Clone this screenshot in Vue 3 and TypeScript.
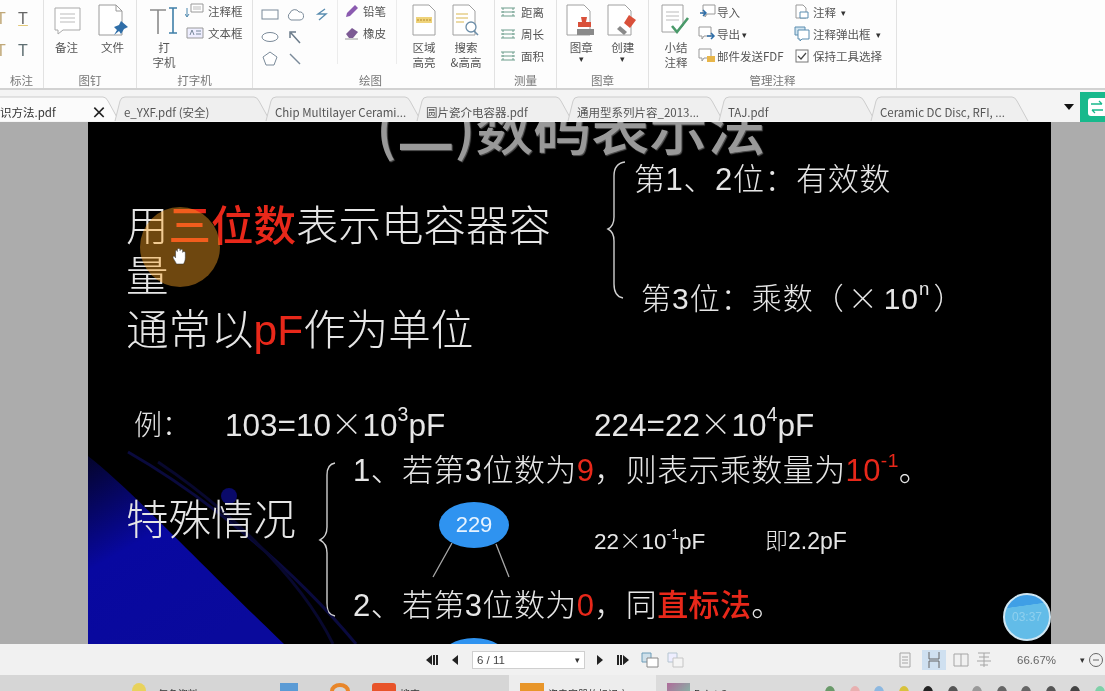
<script setup lang="ts">
interface Tab { label: string; width: number; active?: boolean }

const tabs: Tab[] = [
  { label: '识方法.pdf', width: 115, active: true },
  { label: 'e_YXF.pdf (安全)', width: 151 },
  { label: 'Chip Multilayer Cerami...', width: 151 },
  { label: '圆片瓷介电容器.pdf', width: 151 },
  { label: '通用型系列片容_2013...', width: 151 },
  { label: 'TAJ.pdf', width: 152 },
  { label: 'Ceramic DC Disc, RFI, ...', width: 153 },
]

const toolsMeasure = ['距离', '周长', '面积']
const trayColors = ['#6a9a6a', '#e8b0b0', '#8db8e0', '#d8c23c', '#222', '#555', '#999', '#666', '#666', '#555', '#444', '#7fd0a8']

function tabPath(w: number, active?: boolean) {
  const left = active ? '-2 25 L-2 1' : '0 25 L5 5 Q6 1 10 1'
  return `M${left} H${w - 12} Q${w - 9} 1 ${w - 7} 5 L${w + 4} 25`
}
</script>

<template>
  <div class="app">
    <!-- ribbon -->
    <div class="ribbon">
      <section class="group" style="width: 44px">
        <div class="body mark-tools">
          <span class="t-mark o">T</span><span class="t-mark u">T</span>
          <span class="t-mark o">T</span><span class="t-mark w">T</span>
        </div>
        <div class="glabel">标注</div>
      </section>

      <section class="group" style="width: 93px">
        <div class="body big-row">
          <div class="big">
            <svg width="30" height="32" viewBox="0 0 30 32"><path d="M3 4h25v22H11l-5 4v-4H3z" fill="#fff" stroke="#a9a9a9" /><path d="M8 10h15M8 14h15M8 18h15" stroke="#bbb" /></svg>
            <span>备注</span>
          </div>
          <div class="big">
            <svg width="32" height="32" viewBox="0 0 32 32"><path d="M2 1h17l6 6v24H2z" fill="#fff" stroke="#9a9a9a" /><path d="M19 1v6h6" fill="none" stroke="#9a9a9a" /><path d="M24 17l7 6-4 2-3 5-2-3-5 4 3-5-3-3 5-2z" fill="#2f6ea8" /></svg>
            <span>文件</span>
          </div>
        </div>
        <div class="glabel">图钉</div>
      </section>

      <section class="group" style="width: 116px">
        <div class="body big-row typer">
          <div class="big tw">
            <svg width="30" height="30" viewBox="0 0 30 30"><path d="M1 4h16M9 4v24" stroke="#8a8a8a" stroke-width="1.6" fill="none" /><path d="M20 2h8M24 2v25M20 27h8" stroke="#3f7fa8" stroke-width="1.6" fill="none" /></svg>
            <span>打<br />字机</span>
          </div>
          <div class="small-list">
            <div class="small"><svg width="20" height="16" viewBox="0 0 20 16"><path d="M6 1h12v8H6z" fill="#fff" stroke="#999" /><path d="M8 4h8M8 6h8" stroke="#bbb" /><path d="M2 5v8M0 11l2 3 2-3" fill="none" stroke="#4b86ad" /></svg>注释框</div>
            <div class="small"><svg width="20" height="14" viewBox="0 0 20 14"><path d="M2 2h16v10H2z" fill="#eef" stroke="#999" /><path d="M5 9l2-5 2 5M11 5h5M11 8h5" fill="none" stroke="#789" /></svg>文本框</div>
          </div>
        </div>
        <div class="glabel">打字机</div>
      </section>

      <section class="group" style="width: 242px">
        <div class="body draw">
          <div class="shapes">
            <svg width="18" height="14" viewBox="0 0 18 14"><rect x="1" y="2" width="16" height="9" fill="#fff" stroke="#7a8a99" /></svg>
            <svg width="18" height="14" viewBox="0 0 18 14"><path d="M5 12a4 4 0 0 1-1-7 5 5 0 0 1 9-1 4 4 0 0 1 1 8z" fill="#fff" stroke="#7a8a99" /></svg>
            <svg width="18" height="14" viewBox="0 0 18 14"><path d="M12 1L5 6h8l-7 6" fill="none" stroke="#5a8db0" stroke-width="1.4" /></svg>
            <svg width="18" height="14" viewBox="0 0 18 14"><ellipse cx="9" cy="7" rx="8" ry="4.5" fill="#fff" stroke="#7a8a99" /></svg>
            <svg width="18" height="14" viewBox="0 0 18 14"><path d="M14 13L5 3M4 8V2h6" fill="none" stroke="#6b7b8a" stroke-width="1.5" /></svg>
            <i></i>
            <svg width="18" height="16" viewBox="0 0 18 16"><path d="M9 1l7 5-3 8H5L2 6z" fill="#fff" stroke="#7a8a99" /></svg>
            <svg width="18" height="16" viewBox="0 0 18 16"><path d="M4 3l10 10" stroke="#7a8a99" stroke-width="1.4" /></svg>
          </div>
          <div class="pencils">
            <div class="small"><svg width="16" height="16" viewBox="0 0 16 16"><path d="M2 14l1-4 8-8 3 3-8 8z" fill="#8b5bb0" /></svg>铅笔</div>
            <div class="small"><svg width="16" height="16" viewBox="0 0 16 16"><path d="M2 9l6-6 6 4-5 6H5z" fill="#7c5a94" /><path d="M1 14h13" stroke="#999" /></svg>橡皮</div>
          </div>
          <div class="big area">
            <svg width="24" height="32" viewBox="0 0 24 32"><path d="M1 1h16l6 6v24H1z" fill="#fff" stroke="#a0a0a0" /><path d="M4 13h16v6H4z" fill="#efd37a" /><path d="M5 16h14" stroke="#b58a2c" stroke-dasharray="2 1" /></svg>
            <span>区域<br />高亮</span>
          </div>
          <div class="big search">
            <svg width="28" height="32" viewBox="0 0 28 32"><path d="M1 1h16l6 6v24H1z" fill="#fff" stroke="#a0a0a0" /><path d="M4 10h12M4 14h12M4 18h8" stroke="#d9b64e" /><circle cx="19" cy="23" r="5" fill="#fff" stroke="#6b8da8" stroke-width="1.3" /><path d="M22 27l4 4" stroke="#6b8da8" stroke-width="1.6" /></svg>
            <span>搜索<br />&amp;高高</span>
          </div>
        </div>
        <div class="glabel draw-label">绘图</div>
      </section>

      <section class="group" style="width: 62px">
        <div class="body measure">
          <div v-for="m in toolsMeasure" :key="m" class="small">
            <svg width="16" height="12" viewBox="0 0 16 12"><path d="M1 2h14M1 10h14M1 6h14" stroke="#6d9d8c" /><path d="M3 2v8M13 2v8" stroke="#6d9d8c" stroke-dasharray="2 1" /></svg>{{ m }}
          </div>
        </div>
        <div class="glabel">测量</div>
      </section>

      <section class="group" style="width: 92px">
        <div class="body big-row stamps">
          <div class="big">
            <svg width="30" height="32" viewBox="0 0 30 32"><path d="M1 1h17l6 6v24H1z" fill="#fff" stroke="#a0a0a0" /><path d="M15 13h6l-1 5h5v5H12v-5h4z" fill="#d9503a" /><path d="M11 25h17v6H11z" fill="#8a8a8a" /></svg>
            <span>图章<b class="caret block">▾</b></span>
          </div>
          <div class="big">
            <svg width="32" height="32" viewBox="0 0 32 32"><path d="M1 1h17l6 6v24H1z" fill="#fff" stroke="#a0a0a0" /><path d="M22 11l7 5-6 8-6-5z" fill="#d9503a" /><path d="M13 22l7 6-3 3-7-6z" fill="#8a8a8a" /></svg>
            <span>创建<b class="caret block">▾</b></span>
          </div>
        </div>
        <div class="glabel">图章</div>
      </section>

      <section class="group last" style="width: 248px">
        <div class="body manage">
          <div class="big summary">
            <svg width="30" height="32" viewBox="0 0 30 32"><path d="M1 1h21v21l-6 6H1z" fill="#fff" stroke="#a0a0a0" /><path d="M5 8h13M5 12h13M5 16h13" stroke="#bbb" /><path d="M11 22l5 6 11-14" fill="none" stroke="#4a9a6a" stroke-width="2.6" /></svg>
            <span>小结<br />注释</span>
          </div>
          <div class="small-list col2">
            <div class="small"><svg width="20" height="16" viewBox="0 0 20 16"><path d="M6 1h12v9H10l-2 3v-3H6z" fill="#fff" stroke="#999" /><path d="M3 9h6M6 6l3 3-3 3" fill="none" stroke="#2f6ea8" stroke-width="1.5" /></svg>导入</div>
            <div class="small"><svg width="20" height="16" viewBox="0 0 20 16"><path d="M2 1h12v9H7l-2 3v-3H2z" fill="#fff" stroke="#999" /><path d="M10 10h7M14 7l3 3-3 3" fill="none" stroke="#2f6ea8" stroke-width="1.5" /></svg>导出<b class="caret">▾</b></div>
            <div class="small"><svg width="20" height="16" viewBox="0 0 20 16"><path d="M2 1h12v9H7l-2 3v-3H2z" fill="#fff" stroke="#999" /><path d="M10 8h8v6h-8z" fill="#e8b64a" /></svg>邮件发送FDF</div>
          </div>
          <div class="small-list col3">
            <div class="small"><svg width="16" height="16" viewBox="0 0 16 16"><path d="M2 1h7l3 3v10H2z" fill="#fff" stroke="#999" /><path d="M6 8h8v6H6z" fill="#fff" stroke="#5a8db0" /></svg>注释<b class="caret">▾</b></div>
            <div class="small"><svg width="16" height="16" viewBox="0 0 16 16"><path d="M1 1h10v8H1z" fill="#cfe3ef" stroke="#5a8db0" /><path d="M4 4h11v9H8l-2 2v-2H4z" fill="#fff" stroke="#5a8db0" /></svg>注释弹出框<b class="caret">▾</b></div>
            <div class="small"><svg width="16" height="16" viewBox="0 0 16 16"><rect x="2" y="2" width="12" height="12" fill="#fff" stroke="#777" /><path d="M4 8l3 3 5-6" fill="none" stroke="#444" stroke-width="1.2" /></svg>保持工具选择</div>
          </div>
        </div>
        <div class="glabel">管理注释</div>
      </section>
    </div>

    <!-- tabs -->
    <div class="tabbar">
      <div v-for="t in tabs" :key="t.label" class="tab" :class="{ active: t.active }" :style="{ width: t.width + 'px' }">
        <svg class="tab-shape" :width="t.width + 6" height="26">
          <path :d="tabPath(t.width, t.active)" :fill="t.active ? '#fbfbfb' : '#efefef'" stroke="#cdcdcd" />
        </svg>
        <span class="tab-label">{{ t.label }}</span>
        <span v-if="t.active" class="tab-x">×</span>
      </div>
      <svg class="tab-more" width="10" height="6" viewBox="0 0 10 6"><path d="M0 0h10L5 6z" fill="#111" /></svg>
      <div class="tab-green">
        <span class="swap">
          <svg width="14" height="14" viewBox="0 0 14 14"><path d="M1 4h11M9 1l3 3M13 10H2M5 13l-3-3" fill="none" stroke="#18b98c" stroke-width="1.3" /></svg>
        </span>
      </div>
    </div>

    <!-- document view -->
    <main class="viewer">
      <div class="slide">
        <svg class="slide-bg" width="963" height="522" viewBox="0 0 963 522">
          <defs>
            <linearGradient id="sw" x1="0" y1="0" x2="0.6" y2="1">
              <stop offset="0" stop-color="#04042a" />
              <stop offset="0.45" stop-color="#0808a0" />
              <stop offset="1" stop-color="#0a0a9c" />
            </linearGradient>
          </defs>
          <path d="M0 334C40 365 90 420 196 522H0z" fill="url(#sw)" />
          <path d="M40 330C110 370 200 440 268 522" fill="none" stroke="#0a0a3e" stroke-width="3" />
          <path d="M70 340C130 380 210 450 245 522" fill="none" stroke="#08082e" stroke-width="3" />
          <circle cx="141" cy="374" r="8" fill="#0a0a6a" />
          <path d="M537 40c-8 1-11 6-11 14v41c0 7-2 10-6 12 4 2 6 5 6 12v43c0 8 3 13 9 14" fill="none" stroke="#cfcfcf" stroke-width="1.4" />
          <path d="M247 341c-6 1-8 5-8 12v52c0 8-3 11-7 13 4 2 7 5 7 13v50c0 8 2 12 8 13" fill="none" stroke="#cfcfcf" stroke-width="1.4" />
          <path d="M364 421L345 455M408 422l13 33" stroke="#a8a8a8" stroke-width="1.3" fill="none" />
        </svg>

        <div class="title">(二)数码表示法</div>

        <div class="line main l1">用<em>三位数</em>表示电容器容</div>
        <div class="line main l2">量</div>
        <div class="line main l3">通常以<em class="lat">pF</em>作为单位</div>

        <div class="line r1">第1、2位：有效数</div>
        <div class="line r2">第3位：乘数（<span class="wide">×</span>10<sup>n</sup>）</div>

        <div class="line ex0">例：</div>
        <div class="line ex1">103=10<span class="wide">×</span>10<sup>3</sup>pF</div>
        <div class="line ex2">224=22<span class="wide">×</span>10<sup>4</sup>pF</div>

        <div class="line main sp">特殊情况</div>
        <div class="line c1">1、若第3位数为<em>9</em>，则表示乘数量为<em>10<sup>-1</sup></em>。</div>
        <div class="line c2">2、若第3位数为<em>0</em>，同<em>直标法</em>。</div>

        <div class="oval o1">229</div>
        <div class="oval o2"></div>

        <div class="line n1">22<span class="wide">×</span>10<sup>-1</sup>pF</div>
        <div class="line n2">即2.2pF</div>

        <div class="spot"></div>
        <svg class="hand" width="16" height="18" viewBox="0 0 18 20"><path d="M5 19c-1-3-4-6-4-8 0-1 2-1 3 1V5c0-2 2-2 2 0V3c0-2 3-2 3 0v1c0-2 3-2 3 0v2c0-2 3-1 3 0v6c0 3-1 5-2 7z" fill="#fff" stroke="#333" stroke-width=".6" /></svg>
        <div class="timer"><span>03:37</span></div>
      </div>
    </main>

    <!-- status bar -->
    <div class="status">
      <div class="pager">
        <svg width="14" height="12" viewBox="0 0 14 12"><path d="M7 1L1 6l6 5zM8 1h2v10H8zM11 1h2v10h-2z" fill="#222" /></svg>
        <svg width="9" height="12" viewBox="0 0 9 12"><path d="M8 1L2 6l6 5z" fill="#222" /></svg>
        <div class="page-input"><span>6 / 11</span><b>▾</b></div>
        <svg width="9" height="12" viewBox="0 0 9 12"><path d="M1 1l6 5-6 5z" fill="#222" /></svg>
        <svg width="14" height="12" viewBox="0 0 14 12"><path d="M7 1l6 5-6 5zM1 1h2v10H1zM4 1h2v10H4z" fill="#222" /></svg>
        <svg width="18" height="16" viewBox="0 0 18 16"><path d="M1 1h9v9H1z" fill="#cfe0ea" stroke="#6d9cb8" /><path d="M6 6h11v9H6z" fill="#fff" stroke="#888" /></svg>
        <svg class="dim-icon" width="18" height="16" viewBox="0 0 18 16"><path d="M1 1h9v9H1z" fill="#eef" stroke="#b5c5d0" /><path d="M6 6h10v9H6z" fill="#f4f4f4" stroke="#c5c5c5" /></svg>
      </div>
      <div class="views">
        <svg width="14" height="16" viewBox="0 0 14 16"><path d="M2 1h10v14H2zM4 5h6M4 8h6M4 11h6" fill="none" stroke="#a5a5a5" /></svg>
        <span class="view-on"><svg width="14" height="16" viewBox="0 0 14 16"><path d="M2 0v7h10V0M2 16V9h10v7" fill="none" stroke="#666" /></svg></span>
        <svg width="16" height="16" viewBox="0 0 16 16"><path d="M1 2h14v12H1zM8 2v12" fill="none" stroke="#a5a5a5" /></svg>
        <svg width="16" height="16" viewBox="0 0 16 16"><path d="M2 1h12M3 5h10M8 1v14M1 9h14M4 13h8" fill="none" stroke="#a5a5a5" /></svg>
        <span class="zoom">66.67%</span>
        <b class="caret zoom-caret">▾</b>
        <svg width="16" height="16" viewBox="0 0 16 16"><circle cx="8" cy="8" r="6.5" fill="none" stroke="#666" /><path d="M5 8h6" stroke="#666" /></svg>
      </div>
    </div>

    <!-- taskbar, cut off by the bottom edge -->
    <div class="taskbar">
      <span class="tk" style="width: 132px"></span>
      <span class="tk" style="width: 148px"><i style="width: 14px; background: #e8d25c; border-radius: 50% 50% 0 0"></i><u style="margin-left: 8px">每条资料</u></span>
      <span class="tk" style="width: 50px"><i style="width: 18px; background: #5b9bd5"></i></span>
      <span class="tk" style="width: 42px"><i style="width: 20px; border: 4px solid #e8862a; box-sizing: border-box; border-radius: 50%"></i></span>
      <span class="tk" style="width: 137px"><i style="width: 24px; background: #e8542a; border-radius: 3px"></i><u>搜索</u></span>
      <span class="tk on"><i style="width: 24px; background: #e8962a"></i><u>瓷电容器的标识方</u></span>
      <span class="tk dim"><i style="width: 23px; background: linear-gradient(135deg, #b06a9a, #7fc2a8)"></i><u>Paint.S</u></span>
      <span class="tray">
        <i v-for="(c, n) in trayColors" :key="n" :style="{ background: c }"></i>
      </span>
    </div>
  </div>
</template>

<style scoped>
.app {
  width: 1105px;
  height: 691px;
  overflow: hidden;
  display: flex;
  flex-direction: column;
  background: #f1f1f1;
  color: #555;
  font-family: "Noto Sans CJK SC", "Liberation Sans", sans-serif;
  filter: blur(0.45px);
}

/* ribbon */
.ribbon {
  height: 88px;
  flex: none;
  display: flex;
  background: #fdfdfd;
  border-bottom: 2px solid #d2d2d2;
}
.group {
  flex: none;
  box-sizing: border-box;
  display: flex;
  flex-direction: column;
  border-right: 1px solid #e2e2e2;
}
.group.last { margin-right: auto; }
.body {
  flex: 1;
  min-height: 0;
}
.glabel {
  height: 15px;
  line-height: 15px;
  text-align: center;
  font-size: 11.5px;
  color: #777;
}
.big-row {
  display: flex;
  justify-content: space-around;
}
.big {
  display: flex;
  flex-direction: column;
  align-items: center;
  padding-top: 4px;
  font-size: 11.5px;
  line-height: 15px;
  text-align: center;
  color: #555;
}
.big span { margin-top: 4px; }
.small {
  display: flex;
  align-items: center;
  gap: 3px;
  height: 22px;
  font-size: 11.5px;
  color: #555;
  white-space: nowrap;
}
.caret {
  font-size: 9px;
  font-weight: 400;
  color: #333;
  margin-left: 2px;
}
.caret.block {
  display: block;
  margin: -1px 0 0;
  line-height: 10px;
}

.mark-tools {
  display: grid;
  grid-template-columns: 22px 22px;
  grid-auto-rows: 32px;
  margin-left: -10px;
  padding-top: 9px;
  font-family: "Liberation Sans", sans-serif;
}
.t-mark { font-size: 16px; line-height: 20px; text-align: center; color: #666; }
.t-mark.o { color: #c0a878; }
.t-mark.u { text-decoration: underline #e2c878; }
.t-mark.w { color: #5f6f72; }

.typer { justify-content: flex-start; gap: 6px; padding-left: 12px; }
.tw { width: 30px; padding-top: 6px; }
.tw span { margin-top: 4px; }

.draw { display: flex; padding-left: 8px; }
.shapes {
  width: 80px;
  display: grid;
  grid-template-columns: 25px 27px 25px;
  grid-auto-rows: 22px;
  padding-top: 4px;
  align-items: center;
  align-content: start;
}
.pencils {
  width: 60px;
  margin-left: -4px;
  padding-left: 6px;
  border-left: 1px solid #ececec;
  border-right: 1px solid #ececec;
  height: 64px;
  box-sizing: border-box;
}
.area { width: 44px; margin-left: 5px; }
.search { width: 40px; }
.draw-label { padding-right: 6px; }
.measure { padding: 1px 0 0 5px; }
.measure svg { margin-right: 2px; }
.stamps { padding: 0 4px; }
.manage { display: flex; padding-left: 11px; }
.summary { width: 32px; }
.col2 { width: 97px; margin-left: 5px; padding-top: 1px; }
.col2 .small { gap: 0; }
.col3 { padding-top: 1px; }

/* tabs */
.tabbar {
  height: 32px;
  flex: none;
  display: flex;
  align-items: stretch;
  background: #f4f4f4;
  font-size: 11.5px;
}
.tab {
  flex: none;
  box-sizing: border-box;
  position: relative;
  display: flex;
  align-items: center;
  padding: 11px 0 0 9px;
  color: #555;
  white-space: nowrap;
}
.tab.active {
  padding-left: 0;
  color: #333;
}
.tab-shape {
  position: absolute;
  left: 0;
  bottom: 0;
  overflow: visible;
}
.tab-label { position: relative; }
.tab-x {
  position: absolute;
  right: 8px;
  top: 9px;
  font-size: 16px;
  font-weight: 700;
  line-height: 24px;
  color: #222;
}
.tab-more {
  margin: 14px 0 0 40px;
  flex: none;
}
.tab-green {
  margin-left: auto;
  width: 25px;
  display: flex;
  align-items: center;
  justify-content: flex-end;
  margin-top: 2px;
  background: #18b98c;
}
.swap {
  display: flex;
  align-items: center;
  justify-content: center;
  width: 17px;
  height: 18px;
  background: #fff;
  border-radius: 3px 0 0 3px;
}

/* document */
.viewer {
  height: 522px;
  flex: none;
  background: #acacac;
  padding-left: 88px;
  display: flex;
}
.slide {
  position: relative;
  width: 963px;
  height: 522px;
  overflow: hidden;
  background: #000;
  color: #e6e6e6;
  font-family: "Noto Sans CJK SC", sans-serif;
  font-weight: 300;
}
.slide-bg { position: absolute; inset: 0; }
.line {
  position: absolute;
  white-space: nowrap;
  font-family: "Liberation Sans", "Noto Sans CJK SC", sans-serif;
}
.line em { font-style: normal; color: #e8281a; font-weight: 500; }
.line sup { font-size: 0.62em; line-height: 0; vertical-align: 0.75em; }
.line .wide { font-family: "Noto Sans CJK SC", sans-serif; }
.title {
  position: absolute;
  left: 288px;
  top: -33px;
  font-size: 58px;
  font-weight: 500;
  line-height: 72px;
  color: #999;
  white-space: nowrap;
  text-shadow: 1px 1px 1px #555;
}
.main { font-size: 42.5px; line-height: 50px; left: 38px; }
.l1 { top: 80px; }
.l2 { top: 130px; }
.l3 { top: 184px; }
.lat { font-family: "Liberation Sans", sans-serif; }
.r1 { left: 546px; top: 35px; font-size: 31px; line-height: 46px; letter-spacing: 0.6px; }
.r2 { left: 553px; top: 151px; font-size: 30px; line-height: 46px; letter-spacing: 1px; }
.r2 .wide { margin: 0 5px 0 3px; }
.r2 sup { margin-right: 3px; }
.ex0 { left: 46px; top: 282px; font-size: 28px; line-height: 44px; }
.ex1 { left: 137px; top: 278px; font-size: 31.5px; line-height: 44px; }
.ex2 { left: 506px; top: 278px; font-size: 31.5px; line-height: 44px; }
.sp { top: 374px; }
.c1 { left: 265px; top: 327px; font-size: 31px; line-height: 44px; letter-spacing: 0.4px; }
.c2 { left: 265px; top: 462px; font-size: 31px; line-height: 44px; letter-spacing: 0.4px; }
.oval {
  position: absolute;
  width: 70px;
  height: 46px;
  border-radius: 50%;
  background: #2f93f0;
  color: #e6f3ff;
  font-family: "Liberation Sans", sans-serif;
  font-size: 22px;
  line-height: 46px;
  text-align: center;
}
.o1 { left: 351px; top: 380px; }
.o2 { left: 351px; top: 516px; }
.n1 { left: 506px; top: 398px; font-size: 22.5px; line-height: 38px; }
.n2 { left: 677px; top: 400px; font-size: 23px; line-height: 38px; }
.spot {
  position: absolute;
  left: 52px;
  top: 85px;
  width: 80px;
  height: 80px;
  border-radius: 50%;
  background: rgba(255, 165, 35, 0.43);
}
.hand { position: absolute; left: 84px; top: 125px; }
.timer {
  position: absolute;
  left: 915px;
  top: 471px;
  width: 48px;
  height: 48px;
  box-sizing: border-box;
  border: 2px solid #cfe6f2;
  border-radius: 50%;
  background: linear-gradient(172deg, #3f9fe6 0 26%, #62bce8 27% 100%);
  display: flex;
  align-items: center;
  justify-content: center;
  font-family: "Liberation Sans", sans-serif;
  font-size: 12px;
  color: #8fd0ee;
}

/* status bar */
.status {
  height: 31px;
  flex: none;
  display: flex;
  align-items: center;
  background: #f1f1f1;
  box-sizing: border-box;
}
.pager {
  margin-left: 425px;
  display: flex;
  align-items: center;
  gap: 11px;
}
.page-input {
  width: 113px;
  height: 18px;
  box-sizing: border-box;
  margin-left: 2px;
  padding: 0 4px;
  display: flex;
  justify-content: space-between;
  align-items: center;
  background: #fff;
  border: 1px solid #cfcfcf;
  font-size: 11.5px;
  font-family: "Liberation Sans", sans-serif;
  color: #444;
}
.page-input b { font-size: 9px; color: #333; font-weight: 400; }
.dim-icon { margin-left: -3px; }
.views {
  margin-left: auto;
  display: flex;
  align-items: center;
  gap: 7px;
  padding-right: 1px;
}
.views > svg:first-child { margin-right: 3px; }
.view-on {
  display: flex;
  padding: 2px 5px;
  background: #cfe0f0;
}
.zoom {
  margin-left: 18px;
  width: 54px;
  font-family: "Liberation Sans", sans-serif;
  font-size: 11.5px;
  color: #666;
}
.zoom-caret { margin-right: -4px; }

/* taskbar */
.taskbar {
  height: 16px;
  flex: none;
  display: flex;
  overflow: hidden;
  background: #d6d6d6;
  font-size: 10px;
  color: #333;
}
.tk {
  flex: none;
  box-sizing: border-box;
  display: flex;
  align-items: flex-start;
  gap: 4px;
  padding-top: 8px;
}
.tk i { height: 16px; flex: none; }
.tk u { text-decoration: none; white-space: nowrap; padding-top: 3px; }
.tk.on { background: #ededed; width: 147px; padding-left: 11px; }
.tk.dim { width: 169px; padding-left: 11px; background: #dbdbdb; }
.tray {
  flex: 1;
  display: grid;
  grid-template-columns: repeat(12, 24.5px);
  padding: 11px 0 0 0;
  background: #dbdbdb;
}
.tray i { width: 10px; height: 14px; border-radius: 50% 50% 0 0; }
</style>
